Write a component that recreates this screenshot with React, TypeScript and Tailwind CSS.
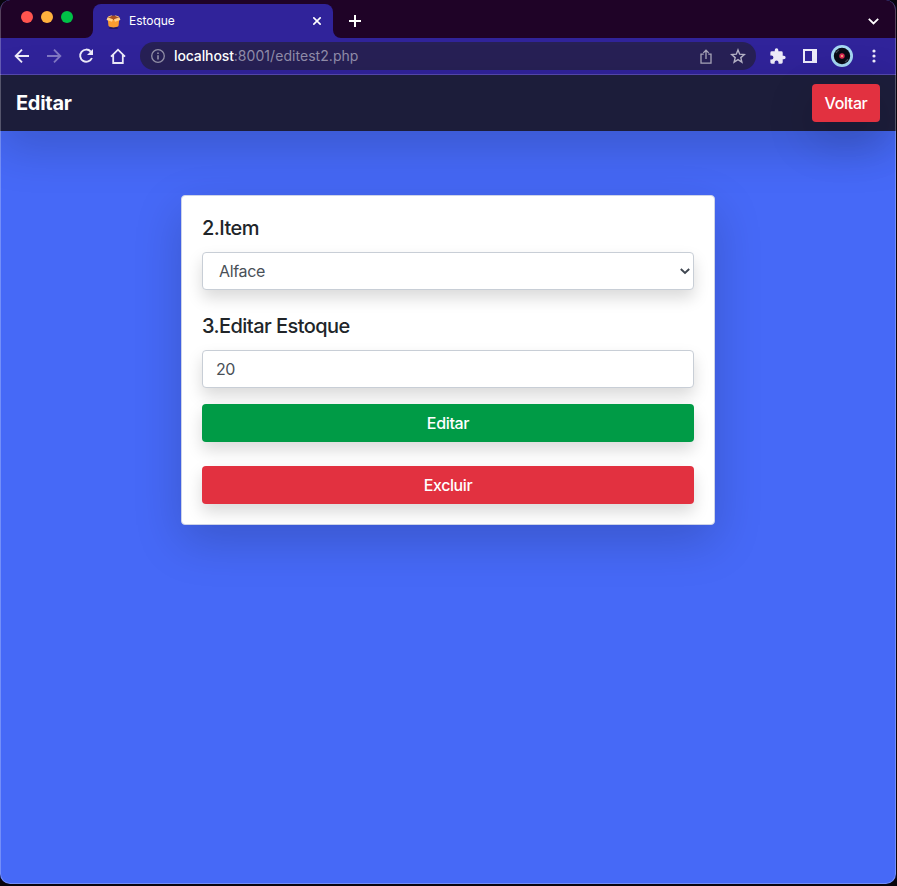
import type { ReactNode } from "react";

const FIELD =
  "flex h-[38px] w-full items-center rounded border border-[#c8ced6] bg-white text-[16px] text-[#495057] shadow-[0_8px_16px_rgba(0,0,0,0.15)]";

function Toolbar() {
  return (
    <div className="flex h-[37px] items-center border-b border-[#5649b0] bg-[#30239a] text-[#eeecfa]">
      <svg className="ml-[14px] size-4 shrink-0" viewBox="0 0 16 16" fill="none" stroke="currentColor" strokeWidth="1.9">
        <path d="M15 8H2.5M8 1.7 1.7 8 8 14.3" />
      </svg>
      <svg className="ml-4 size-4 shrink-0 text-[#8178c4]" viewBox="0 0 16 16" fill="none" stroke="currentColor" strokeWidth="1.9">
        <path d="M1 8h12.5M8 1.7 14.3 8 8 14.3" />
      </svg>
      <svg className="ml-4 size-4 shrink-0" viewBox="0 0 16 16" fill="none" stroke="currentColor" strokeWidth="1.9">
        <path d="M12.8 3.6A6.1 6.1 0 1 0 13.9 10" />
        <path d="M15 1v6H9z" fill="currentColor" stroke="none" />
      </svg>
      <svg className="ml-4 size-4 shrink-0" viewBox="0 0 16 16" fill="none" stroke="currentColor" strokeWidth="1.8">
        <path d="M1 8.6 8 1.7l7 6.9M3.2 7v8h9.6V7" />
      </svg>
      <div className="ml-[14px] flex h-7 w-[616px] shrink-0 items-center rounded-full bg-[#272055] pl-[11px]">
        <svg className="size-[14px] shrink-0" viewBox="0 0 14 14" fill="none" stroke="#9390a8" strokeWidth="1.3">
          <circle cx="7" cy="7" r="6.3" />
          <path d="M7 6.2v4.3M7 3.4v1.6" strokeWidth="1.6" />
        </svg>
        <div className="ml-[9px] w-[185px] whitespace-nowrap text-[14px] leading-5 text-[#918daa]">
          <span className="font-medium tracking-[-0.12px] text-white">localhost</span>
          <span className="tracking-[0.05px]">:8001/editest2.php</span>
        </div>
        <svg className="ml-[341px] h-[15px] w-3 shrink-0" viewBox="0 0 12 15" fill="none" stroke="#aaa7bb" strokeWidth="1.3">
          <path d="M3.7 5.2H1v8.9h10V5.2H8.3M6 10V1.2M3.3 3.9 6 1.2l2.7 2.7" />
        </svg>
        <svg className="ml-[18px] size-[16px] shrink-0" viewBox="0 0 16 16" fill="none" stroke="#b6b3c7" strokeWidth="1.4">
          <path d="m8 1.9 1.7 4.3 4.6.4-3.5 3 1.1 4.6L8 11.7l-3.9 2.5 1.1-4.6-3.5-3 4.6-.4z" />
        </svg>
      </div>
      <svg className="ml-[14px] size-[16px] shrink-0" viewBox="1.500 0.500 22 22" fill="currentColor">
        <path d="M20.5 11H19V7a2 2 0 0 0-2-2h-4V3.500a2.500 2.500 0 0 0-5 0V5H4a2 2 0 0 0-2 2v3.800h1.500a2.700 2.700 0 0 1 0 5.400H2V20a2 2 0 0 0 2 2h3.800v-1.500a2.700 2.700 0 0 1 5.400 0V22H17a2 2 0 0 0 2-2v-4h1.500a2.500 2.500 0 0 0 0-5z" />
      </svg>
      <svg className="ml-[17px] size-[14px] shrink-0" viewBox="0 0 14 14">
        <path fill="currentColor" fillRule="evenodd" d="M0 0h14v14H0zM2 2v10h7V2z" />
      </svg>
      <svg className="ml-[14px] size-[22px] shrink-0" viewBox="0 0 22 22">
        <circle cx="11" cy="11" r="11" fill="#a5d8f2" />
        <circle cx="11" cy="11" r="8.200" fill="#090b16" />
        <path d="M5 8a7 7 0 0 1 3-3M14 17a7 7 0 0 0 3-3" fill="none" stroke="#414756" strokeWidth="1.3" />
        <circle cx="11" cy="11" r="2.700" fill="#d92b56" />
        <circle cx="11" cy="11" r="1.100" fill="#ffb078" />
      </svg>
      <svg className="ml-[19px] h-[14px] w-1 shrink-0" viewBox="0 0 4 14" fill="currentColor">
        <circle cx="2" cy="2" r="1.600" />
        <circle cx="2" cy="7" r="1.600" />
        <circle cx="2" cy="12" r="1.600" />
      </svg>
    </div>
  );
}

function TabStrip() {
  return (
    <div className="flex h-[38px] items-end bg-[#1f0327]">
      <div className="flex h-[38px] w-[85px] shrink-0 items-center gap-2 pb-[4px] pl-[21px]">
        <span className="size-3 rounded-full bg-[#ff544f]" />
        <span className="size-3 rounded-full bg-[#ffb13d]" />
        <span className="size-3 rounded-full bg-[#00c147]" />
      </div>
      <svg className="size-2 shrink-0" viewBox="0 0 8 8">
        <path d="M8 0v8H0a8 8 0 0 0 8-8z" fill="#30239a" />
      </svg>
      <div className="flex h-[34px] w-[240px] shrink-0 items-center rounded-t-lg bg-[#30239a] pl-[13px] text-white">
        <svg className="size-[15px] shrink-0" viewBox="0 0 15 15">
          <ellipse cx="7.500" cy="13.900" rx="4.800" ry="1" fill="#20175f" />
          <path d="M1.800 5h11.400l-.6 6.500q-.2 1-1.200 1.300l-3.900.8-3.900-.8q-1-.3-1.200-1.300z" fill="#f99d31" />
          <path d="m2 3 5.500-1.600L13 3l-1 2.200-4.500.8L3 5.200z" fill="#a8501f" />
          <path d="M2 2.600 6.500 1l-1.500 1.600-2.500 1zM13 2.600 8.500 1 10 2.600l2.500 1z" fill="#f2bd72" />
          <path d="m1.500 3.300 5.500 2-1 2.500L.6 6zM13.500 3.300l-5.500 2 1 2.500L14.400 6z" fill="#ffd08b" />
        </svg>
        <span className="ml-2 w-[180px] text-[12px] leading-4 tracking-[-0.02px]">Estoque</span>
        <svg className="ml-[4px] size-[8px] shrink-0" viewBox="0 0 8 8" fill="none" stroke="currentColor" strokeWidth="1.600">
          <path d="m.3.3 7.400 7.400M7.700.3.3 7.700" />
        </svg>
      </div>
      <svg className="size-2 shrink-0" viewBox="0 0 8 8">
        <path d="M0 0v8h8a8 8 0 0 1-8-8z" fill="#30239a" />
      </svg>
      <svg className="mb-[11px] ml-[8px] size-3 shrink-0" viewBox="0 0 12 12" stroke="#fff" strokeWidth="2">
        <path d="M0 6h12M6 0v12" />
      </svg>
      <svg className="mb-[13px] ml-auto mr-[17px] h-[7px] w-[11px] shrink-0" viewBox="0 0 11 7" fill="none" stroke="#fff" strokeWidth="1.800">
        <path d="m.8.8 4.700 4.700L10.200.8" />
      </svg>
    </div>
  );
}

function Heading({ children }: { children: ReactNode }) {
  return <h5 className="mb-3 text-[20px] font-medium leading-6 tracking-[-0.56px] text-[#212529]">{children}</h5>;
}

export default function App() {
  return (
    <div className="h-[886px] w-[897px] overflow-hidden bg-[#09050d] pb-[2px] pr-px font-['Inter','Liberation_Sans',sans-serif]">
      <div className="relative flex h-[884px] w-[896px] flex-col overflow-hidden rounded-[10px] bg-[#4669f7]">
        <TabStrip />
        <Toolbar />
        <nav className="flex h-14 shrink-0 items-center justify-between bg-[#1c1d3a] px-4 shadow-[0_16px_48px_rgba(0,0,0,0.175)]">
          <span className="text-[20px] font-bold leading-[30px] tracking-[-0.3px] text-white">Editar</span>
          <button className="h-[38px] w-[68px] rounded bg-[#e23140] text-[16px] font-[450] tracking-[-0.4px] text-white shadow-[0_16px_48px_rgba(0,0,0,0.175)]">
            Voltar
          </button>
        </nav>
        <main className="flex justify-center pt-16">
          <form className="flex h-[330px] w-[534px] flex-col rounded border border-[#cdd3e8] bg-white p-5 shadow-[0_16px_48px_rgba(0,0,0,0.175)]">
            <Heading>2.Item</Heading>
            <div className={`${FIELD} justify-between pl-4 pr-[3px]`}>
              <span className="tracking-[-0.35px]">Alface</span>
              <svg className="h-[7px] w-[10px]" viewBox="0 0 10 7" fill="none" stroke="#3f4650" strokeWidth="1.900">
                <path d="m.8 1 4.200 4 4.200-4" />
              </svg>
            </div>
            <div className="mt-6">
              <Heading>3.Editar Estoque</Heading>
            </div>
            <div className={`${FIELD} pl-[13px] tracking-[-0.4px]`}>20</div>
            <button className="mt-4 h-[38px] w-full shrink-0 rounded bg-[#009b46] text-[16px] font-[450] tracking-[-0.35px] text-white shadow-[0_8px_16px_rgba(0,0,0,0.15)]">
              Editar
            </button>
            <button className="mt-6 h-[38px] w-full shrink-0 rounded bg-[#e23140] text-[16px] font-[450] tracking-[-0.4px] text-white shadow-[0_8px_16px_rgba(0,0,0,0.15)]">
              Excluir
            </button>
          </form>
        </main>
        <div className="pointer-events-none absolute inset-0 rounded-[10px] border border-t-0 border-white/25" />
      </div>
    </div>
  );
}
